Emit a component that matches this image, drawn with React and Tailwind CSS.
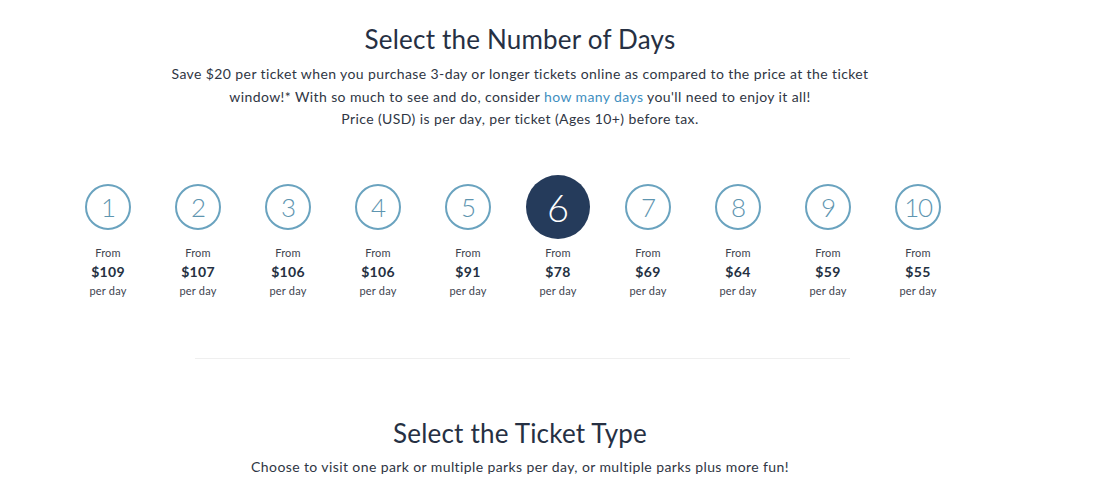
import React from "react";

const days = [
  { n: 1, price: "$109" },
  { n: 2, price: "$107" },
  { n: 3, price: "$106" },
  { n: 4, price: "$106" },
  { n: 5, price: "$91" },
  { n: 6, price: "$78", active: true },
  { n: 7, price: "$69" },
  { n: 8, price: "$64" },
  { n: 9, price: "$59" },
  { n: 10, price: "$55" },
];

function DayOption({ n, price, active }) {
  return (
    <div className="w-[90px] flex flex-col items-center">
      <div className="h-16 flex items-center justify-center">
        {active ? (
          <div className="w-16 h-16 rounded-full bg-[#253b5b] flex items-center justify-center text-white text-[38px] font-light leading-none">
            {n}
          </div>
        ) : (
          <div className="w-[46px] h-[46px] rounded-full border-2 border-[#6aa3bf] flex items-center justify-center text-[#5e95b0] text-[26px] font-light leading-none tracking-tighter">
            {n}
          </div>
        )}
      </div>
      <div className="mt-[5px] text-[11px] leading-[18px] tracking-[0.2px] text-[#3d4450]">From</div>
      <div className="text-[14px] leading-[20px] font-bold tracking-[0.3px] text-[#253142]">{price}</div>
      <div className="text-[11px] leading-[18px] tracking-[0.2px] text-[#3d4450]">per day</div>
    </div>
  );
}

export default function App() {
  return (
    <div className="w-[1100px] h-[494px] bg-white overflow-hidden font-['Lato','Noto_Sans',sans-serif] text-[#2b3445]">
      <div className="w-[1040px] flex flex-col items-center">
        {/* number of days */}
        <h1 className="mt-[23px] text-[26px] leading-[32px] tracking-[0.2px] text-[#263043]">Select the Number of Days</h1>
        <div className="mt-[8px] text-center text-[14px] leading-[22.5px] tracking-[0.4px] text-[#2f3644]">
          <p>
            Save $20 per ticket when you purchase 3-day or longer tickets online as compared to the price at the ticket
            <br />
            window!* With so much to see and do, consider <a href="#" className="text-[#3f8fbf]">how many days</a> you'll need to enjoy it all!
          </p>
          <p>Price (USD) is per day, per ticket (Ages 10+) before tax.</p>
        </div>

        <div className="mt-[44px] self-start ml-[63px] flex">
          {days.map((d) => (
            <DayOption key={d.n} {...d} />
          ))}
        </div>

        <div className="mt-[58px] self-start ml-[195px] w-[655px] h-px bg-[#efefef]" />

        {/* ticket type */}
        <h2 className="mt-[58px] text-[26px] leading-[32px] tracking-[0.2px] text-[#263043]">Select the Ticket Type</h2>
        <p className="mt-[7px] text-[14px] leading-[22px] tracking-[0.4px] text-[#2f3644]">
          Choose to visit one park or multiple parks per day, or multiple parks plus more fun!
        </p>
      </div>
    </div>
  );
}
